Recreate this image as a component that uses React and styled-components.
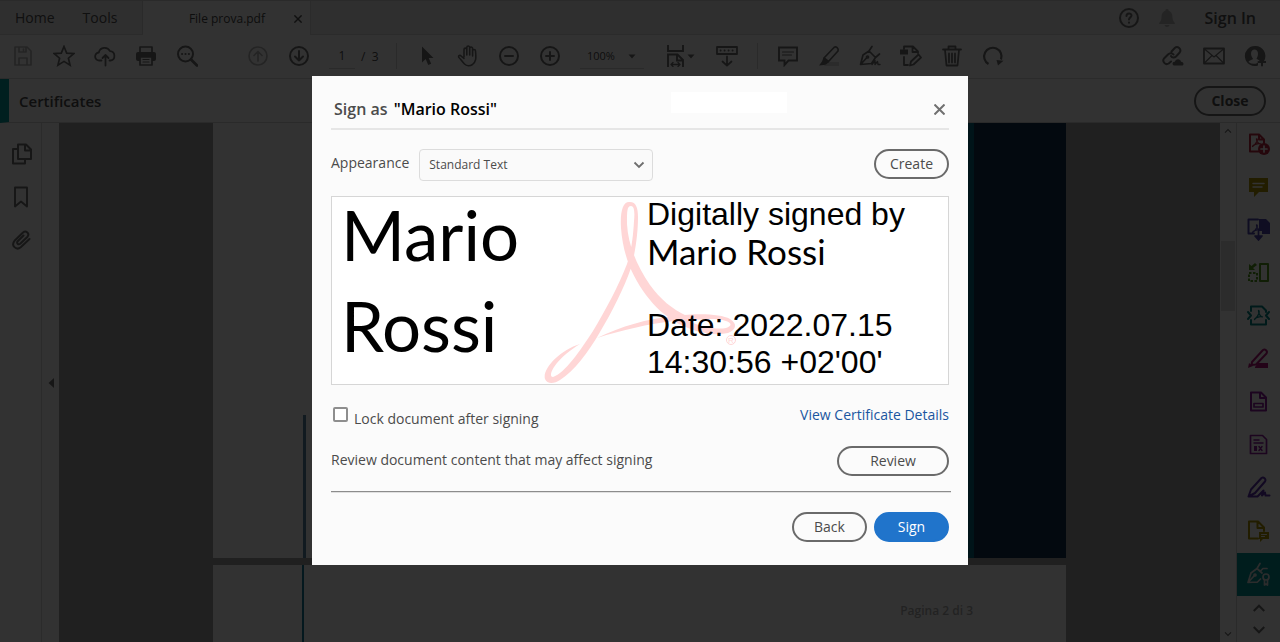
import React, { useState } from 'react';
import styled, { createGlobalStyle } from 'styled-components';

const GlobalStyle = createGlobalStyle`
  * {
    box-sizing: border-box;
  }

  body {
    margin: 0;
    overflow: hidden;
    font-family: 'Open Sans', 'Noto Sans', sans-serif;
    font-size: 14px;
    color: #4b4b4b;
  }

  button, input, select {
    font: inherit;
    color: inherit;
  }
`;

/* ---------- shell ---------- */

const Shell = styled.div`
  display: flex;
  flex-direction: column;
  height: 100vh;
  background: #fafafa;
`;

const TabBar = styled.header`
  display: flex;
  align-items: stretch;
  height: 35px;
  background: #e8e8e8;
  border-top: 1px solid #d0d0d0;
  border-bottom: 1px solid #d8d8d8;
`;

const MenuButton = styled.button`
  padding: 0;
  border: 0;
  background: none;
  color: #505050;
`;

const Menu = styled.nav`
  display: flex;
  gap: 28px;
  width: 143px;
  padding-left: 15px;
  border-right: 1px solid #d0d0d0;
`;

const FileTab = styled.div`
  display: flex;
  align-items: center;
  justify-content: flex-end;
  gap: 29px;
  width: 168px;
  padding-right: 8px;
  margin-bottom: -1px;
  background: #fafafa;
  border-right: 1px solid #d8d8d8;
  font-size: 12px;
  color: #464646;
`;

const Account = styled.div`
  display: flex;
  align-items: center;
  gap: 16px;
  margin-left: auto;
  padding-right: 24px;
`;

const SignIn = styled(MenuButton)`
  margin-left: 11px;
  font-size: 16px;
  font-weight: 600;
`;

const Toolbar = styled.div`
  display: flex;
  align-items: center;
  gap: 19px;
  height: 44px;
  padding: 0 14px 1px 12px;
  border-bottom: 1px solid #d8d8d8;
  font-size: 12px;
`;

const IconButton = styled.button`
  display: flex;
  align-items: center;
  justify-content: center;
  width: ${(p) => p.$width || 22}px;
  height: 22px;
  flex: none;
  padding: 0;
  border: 0;
  background: none;
  color: ${(p) => (p.$faded ? '#b4b4b4' : '#6e6e6e')};
  margin-left: ${(p) => (p.$spaced ? '30px' : '0')};
`;

const Separator = styled.span`
  width: 1px;
  height: 26px;
  background: #d0d0d0;
`;

const PageBox = styled.label`
  display: flex;
  align-items: center;
  gap: 6px;
  width: 48px;
  white-space: pre;
`;

const PageInput = styled.input`
  width: 26px;
  height: 26px;
  padding: 0;
  border: 0;
  border-bottom: 1px solid #d0d0d0;
  background: none;
  text-align: center;
`;

const SelectBox = styled.span`
  display: grid;
  align-items: center;

  > * {
    grid-area: 1 / 1;
  }

  > svg {
    justify-self: end;
    margin-right: 8px;
    pointer-events: none;
  }
`;

const ZoomSelect = styled.select`
  appearance: none;
  width: 64px;
  height: 26px;
  padding: 0 0 0 7px;
  border: 0;
  border-bottom: 1px solid #d0d0d0;
  background: none;
  font-size: 11px;
`;

const Share = styled.div`
  display: flex;
  gap: 19px;
  margin-left: auto;
`;

const ToolHeader = styled.div`
  display: flex;
  align-items: center;
  justify-content: space-between;
  height: 44px;
  padding: 0 14px 0 10px;
  border-left: 9px solid #009a9a;
  border-bottom: 1px solid #d0d0d0;
`;

const ToolTitle = styled.h1`
  margin: 0;
  font-size: 15px;
  font-weight: 600;
`;

const PillButton = styled.button`
  width: ${(p) => p.$width || 75}px;
  height: 30px;
  padding: 0;
  border: 2px solid ${(p) => (p.$primary ? '#2074cb' : '#6a6a6a')};
  border-radius: 15px;
  background: ${(p) => (p.$primary ? '#2074cb' : 'transparent')};
  color: ${(p) => (p.$primary ? '#ffffff' : '#4b4b4b')};
  font-size: 14px;
  font-weight: ${(p) => (p.$bold ? 700 : 400)};
  line-height: 20px;
`;

/* ---------- document area ---------- */

const Workspace = styled.div`
  display: flex;
  flex: 1;
  min-height: 0;
`;

const LeftRail = styled.nav`
  display: flex;
  flex-direction: column;
  align-items: center;
  gap: 21px;
  width: 42px;
  padding: 20px 0 0 2px;
  border-right: 1px solid #d8d8d8;
`;

const CollapseStrip = styled.div`
  display: flex;
  align-items: center;
  justify-content: center;
  width: 17px;
`;

const Viewer = styled.main`
  display: flex;
  flex-direction: column;
  align-items: center;
  gap: 7px;
  flex: 1;
  overflow: hidden;
  background: #a0a0a0;
`;

const Sheet = styled.section`
  display: flex;
  flex: none;
  width: calc(100% - 308px);
  height: 435px;
  background: #fafafa;
`;

const MarginLine = styled.div`
  align-self: flex-end;
  width: ${(p) => p.$width}px;
  height: ${(p) => p.$height};
  margin-left: ${(p) => p.$offset}px;
  background: ${(p) => p.$color};
`;

const CoverBanner = styled.div`
  width: 108px;
  margin-left: auto;
  border-left: 16px solid #00647d;
  background: #12304e;
`;

const PageNumber = styled.p`
  margin: 37px 93px 0 auto;
  font-size: 12px;
  font-weight: 600;
  line-height: 18px;
  color: #acacac;
`;

const Scrollbar = styled.div`
  display: flex;
  flex-direction: column;
  align-items: center;
  width: 17px;
  padding: 4px 0;
  border-right: 1px solid #d0d0d0;
`;

const Thumb = styled.div`
  width: 14px;
  height: 70px;
  margin-top: 106px;
  margin-bottom: auto;
  background: #dcdcdc;
`;

const RightRail = styled.nav`
  display: flex;
  flex-direction: column;
  width: 43px;
`;

const RailButton = styled.button`
  display: flex;
  align-items: center;
  justify-content: center;
  flex: none;
  width: 43px;
  height: ${(p) => p.$height || 43}px;
  padding: 0 0 2px;
  border: 0;
  background: ${(p) => (p.$active ? '#008f93' : 'none')};
  color: ${(p) => p.$color};
`;

/* ---------- dialog ---------- */

const Backdrop = styled.div`
  position: fixed;
  inset: 0;
  display: flex;
  justify-content: center;
  align-items: flex-start;
  padding-top: 76px;
  background: rgba(0, 0, 0, 0.8);
`;

const Dialog = styled.section`
  width: 656px;
  padding: 0 19px 23px;
  background: #fbfbfb;
`;

const DialogHeader = styled.header`
  display: flex;
  align-items: center;
  height: 54px;
  padding: 14px 0 0 3px;
  border-bottom: 2px solid #e6e6e6;
`;

const DialogTitle = styled.h2`
  margin: 0;
  font-size: 16px;
  font-weight: 600;

  strong {
    margin-left: 2px;
    font-weight: 600;
    color: #000000;
  }
`;

const BlankPatch = styled.div`
  align-self: flex-start;
  width: 116px;
  height: 21px;
  margin: 2px 142px 0 auto;
  background: #ffffff;
`;

const CloseButton = styled.button`
  display: flex;
  align-items: center;
  justify-content: center;
  width: 20px;
  height: 20px;
  padding: 0;
  border: 0;
  background: none;
  color: #707070;
`;

const Row = styled.div`
  display: flex;
  align-items: flex-start;
  justify-content: space-between;
  margin-top: ${(p) => p.$top}px;
`;

const AppearanceField = styled.div`
  display: flex;
  align-items: flex-start;
  gap: 10px;
`;

const FieldText = styled.span`
  line-height: 28px;
`;

const AppearanceSelect = styled.select`
  appearance: none;
  width: 234px;
  height: 32px;
  padding: 0 30px 2px 9px;
  border: 1px solid #dcdcdc;
  border-radius: 4px;
  background: #fafafa;
  font-size: 12px;
`;

const Preview = styled.div`
  position: relative;
  display: grid;
  grid-template-columns: 315px 1fr;
  height: 189px;
  margin-top: 15px;
  border: 1px solid #d6d6d6;
  background: #ffffff;
  color: #000000;
`;

const Watermark = styled.svg`
  position: absolute;
  left: 208px;
  top: 0;
`;

const SignerName = styled.div`
  position: relative;
  width: 220px;
  margin-top: -8px;
  padding-left: 9px;
  font-family: Lato, sans-serif;
  font-size: 69px;
  line-height: 91px;
`;

const SignatureText = styled.div`
  position: relative;
  margin-top: -1px;
  font-family: 'Liberation Sans', Arial, sans-serif;
  font-size: 32px;
  line-height: 37px;

  p {
    margin: 0;
  }
`;

const SignatureName = styled.div`
  font-family: Lato, sans-serif;
  font-size: 35px;
`;

const CheckLabel = styled.label`
  display: flex;
  align-items: flex-start;
  gap: 6px;
  padding-left: 2px;
  line-height: 20px;

  span {
    padding-top: 4px;
  }
`;

const Checkbox = styled.input`
  appearance: none;
  width: 15px;
  height: 15px;
  margin: 2px 0 0;
  border: 2px solid #8e8e8e;
  border-radius: 2px;
  background: #ffffff;
`;

const DetailsLink = styled.a`
  line-height: 20px;
  color: #1a56a0;
  text-decoration: none;
`;

const Divider = styled.hr`
  margin: 15px -2px 0 0;
  border: 0;
  border-top: 1px solid #8c8c8c;
  border-bottom: 1px solid #e0e0e0;
`;

const Actions = styled.footer`
  display: flex;
  justify-content: flex-end;
  gap: 7px;
  margin-top: 19px;
`;

/* ---------- icons ---------- */

const Icon = ({ children, size = 22, width = 1.7 }) => (
  <svg
    width={size}
    height={size}
    viewBox={`0 0 ${size} ${size}`}
    fill="none"
    stroke="currentColor"
    strokeWidth={width}
    strokeLinejoin="round"
    strokeLinecap="round"
    aria-hidden="true"
  >
    {children}
  </svg>
);

const Caret = () => (
  <svg width="8" height="5" viewBox="0 0 8 5" aria-hidden="true">
    <path d="M0.5 0.5h7L4 4.5z" fill="#6e6e6e" />
  </svg>
);

const Chevron = ({ up, size = 12, color = '#6e6e6e' }) => (
  <svg width={size} height={size} viewBox="0 0 12 12" fill="none" stroke={color} strokeWidth="1.8" aria-hidden="true">
    <path d={up ? 'M1.5 8.5L6 4l4.500 4.500' : 'M1.500 3.500L6 8l4.500-4.500'} />
  </svg>
);

const icons = {
  save: (
    <Icon>
      <path d="M3 2h12l4 4v14H3z M7 20v-7h8v7 M7 2v5h7V2 M11.500 4v1.500" />
    </Icon>
  ),
  star: (
    <Icon>
      <path d="M11 1.500l2.700 6.600 7.100.5-5.400 4.600 1.700 7L11 16.400 4.900 20.200l1.700-7L1.200 8.600l7.100-.5z" strokeLinejoin="miter" />
    </Icon>
  ),
  cloud: (
    <Icon width={1.8}>
      <path d="M7.500 15.500H5.500a4 4 0 0 1-.7-8A6 6 0 0 1 16 6.200a4.700 4.700 0 0 1 .6 9.300H15.500 M11.500 20.500v-10 M8.500 13l3-3 3 3" />
    </Icon>
  ),
  print: (
    <Icon>
      <path d="M5 7V2h12v5" />
      <rect x="1" y="7" width="20" height="9" rx="2" fill="currentColor" stroke="none" />
      <path d="M5 12h12v8H5z" fill="#fafafa" />
      <path d="M8 14.500h6M8 17h6" strokeWidth="1.200" />
    </Icon>
  ),
  search: (
    <Icon width={2}>
      <circle cx="9.500" cy="9" r="7.500" />
      <path d="M15 14.500l6 6" strokeWidth="2.800" />
      <path d="M6 9h.2M9.400 9h.2M12.800 9h.2" />
    </Icon>
  ),
  up: (
    <Icon>
      <circle cx="11" cy="11" r="9" />
      <path d="M11 16V6.500M7 10.500l4-4 4 4" />
    </Icon>
  ),
  down: (
    <Icon width={2}>
      <circle cx="11" cy="11" r="9" />
      <path d="M11 6v9.500M7 11.500l4 4 4-4" />
    </Icon>
  ),
  cursor: (
    <Icon>
      <path d="M6 1.500v16l3.700-3.400 2.500 5.900 3-1.300-2.500-5.700h4.800z" fill="currentColor" stroke="none" />
    </Icon>
  ),
  hand: (
    <Icon width={1.6}>
      <path d="M7 12V4.500a1.400 1.400 0 0 1 2.800 0V10 M9.800 10V2.500a1.400 1.400 0 0 1 2.900 0V10 M12.700 10V3.500a1.400 1.400 0 0 1 2.900 0V11 M15.600 10V6a1.400 1.400 0 0 1 2.900 0c.8 8 .5 10.500-3 13.500-2.500 1.600-6 1.500-8-.5C5 16.500 3.500 14 1.700 12.200c-.5-1.400.6-2.200 1.900-1.600L7 13.500" />
    </Icon>
  ),
  minus: (
    <Icon width={2}>
      <circle cx="11" cy="11" r="9" />
      <path d="M7 11h8" />
    </Icon>
  ),
  plus: (
    <Icon width={2}>
      <circle cx="11" cy="11" r="9" />
      <path d="M7 11h8M11 7v8" />
    </Icon>
  ),
  fit: (
    <Icon width={1.9}>
      <path d="M3 0v6h15V0 M3 22V9.500h9.500L18 15v7 M12 10v5.500h6" strokeLinecap="butt" strokeLinejoin="miter" />
      <path d="M6 19.500h9M8 17.500l-2 2 2 2M13 17.500l2 2-2 2" strokeWidth="1.300" />
    </Icon>
  ),
  keyboard: (
    <Icon width={1.8}>
      <rect x="1" y="2" width="20" height="7" />
      <path d="M4.500 5.500h.2M8.500 5.500h.2M12.500 5.500h.2M16.500 5.500h.2" />
      <path d="M11 11.500v9M6.500 16.500l4.500 4.200 4.500-4.200" />
    </Icon>
  ),
  comment: (
    <Icon width={1.9}>
      <path d="M2 2.500h18v13h-8.500L7.500 20v-4.500H2z" strokeLinejoin="miter" />
      <path d="M5.500 7h11M5.500 10h9" strokeWidth="1.200" />
    </Icon>
  ),
  highlight: (
    <Icon>
      <path d="M8 17h13v4H6z" fill="#d8d8d8" stroke="none" />
      <path d="M6 13L16 2.500c2-1.500 5 .5 4 3.500L10.500 16.500z" />
      <path d="M5.500 12.500l5.500 4.500-3 2.500-2 .5-5 .5 3-4z" fill="currentColor" stroke="none" />
    </Icon>
  ),
  pen: (
    <Icon>
      <path d="M1.500 19.500L4 10l6-4 6.500 6.500-4 6z M2 19l5.500-6 M10 6l3-4.500 M16.500 12.500L20.500 9" />
      <circle cx="8.500" cy="12" r="1" />
      <path d="M13 19.500l3-4v4l2.500-3 .5 3h2" strokeWidth="1.400" />
    </Icon>
  ),
  edit: (
    <Icon width={1.8}>
      <rect x="0" y="4.500" width="8" height="5" fill="currentColor" stroke="none" />
      <path d="M4 4V1.500h9l5 5V8 M12.500 2v5H18 M4 12v8h4" />
      <path d="M10 20.500l1-4 7.500-7 2.500 3-7.500 7z" />
    </Icon>
  ),
  trash: (
    <Icon width={1.8}>
      <path d="M2 4.500h18 M7.500 4V1.500h7V4 M4 5l1.500 15.500h11L18 5 M8 8.500v9M11 8.500v9M14 8.500v9" />
    </Icon>
  ),
  rotate: (
    <Icon width={2.2}>
      <path d="M6.500 19A8.700 8.700 0 1 1 19 14.500" strokeLinecap="butt" />
      <path d="M14.500 15l7 .8-5.500 4.700z" fill="currentColor" stroke="none" />
    </Icon>
  ),
  link: (
    <Icon width={2}>
      <path d="M9.500 6.500l3.500-3.700c2.500-2.200 7 1.200 4.700 4.700L14 11.500c-1.500 1.500-4 1.300-5-.5 M11.500 9.500c-1.500-2-4-1.500-5.500 0L2 13.500c-2.200 3 1.500 7 4.700 5L9 16.500" />
      <path d="M12 20.500c-2.500-1-1.500-4 .8-3.700 1.200-4 6-3 6.200 0 3.200.2 3.200 3.500 1 3.700z" fill="currentColor" stroke="none" />
    </Icon>
  ),
  mail: (
    <Icon width={1.8}>
      <rect x="1" y="3.500" width="20" height="15" />
      <path d="M1.500 4l9.500 8 9.500-8 M1.500 18l7.500-7.500M20.500 18L13 10.500" strokeWidth="1.200" />
    </Icon>
  ),
  user: (
    <Icon width={1.8}>
      <path d="M11 1a10 10 0 1 0 3 19.500V16h6a10 10 0 0 0-9-15z" fill="currentColor" stroke="none" />
      <path d="M4.500 17c1-2 4-2 4.500-3.200C6 10 6.500 4.500 10.500 4.500S15 10 12.500 13.800l3 1.700-2 2.500a9 9 0 0 1-9-1z" fill="#fafafa" stroke="none" />
      <path d="M18 13.500v7M14.500 17h7" strokeWidth="2" />
    </Icon>
  ),
  help: (
    <Icon width={2}>
      <circle cx="11" cy="11" r="9" />
      <path d="M8.500 9c0-3.300 5-3.300 5-.5 0 1.900-2.500 1.900-2.500 4M11 15.500v.2" />
    </Icon>
  ),
  bell: (
    <Icon>
      <path d="M11 2a1.500 1.500 0 0 1 1.600 1.700C16 5 16.500 8 16.500 11c0 3 2.500 4 2.500 6H3c0-2 2.500-3 2.500-6 0-3 .5-6 3.900-7.300A1.500 1.500 0 0 1 11 2zM8.500 18h5c-.5 2.500-4.500 2.500-5 0z" fill="currentColor" stroke="none" />
    </Icon>
  ),
  pages: (
    <Icon width={2}>
      <path d="M7 1.500h8l5 5V16H7z M14 2v5.500h5.500 M7 6H2v14.500h12V16" />
    </Icon>
  ),
  bookmark: (
    <Icon width={1.9}>
      <path d="M4 1.500h12v19l-6-5-6 5z" />
    </Icon>
  ),
  clip: (
    <Icon width={2}>
      <path d="M18.500 10l-8.800 8.300c-4.500 3.600-10-1.800-6.200-6.500L12 3.500c3-2.500 7 1 4.500 4.200l-7.300 7c-2 1.400-4-.6-2.500-2.500L12.500 6.500" />
    </Icon>
  ),
};

// small acrobat squiggle used inside several rail icons
const Squiggle = () => (
  <path d="M9.500 7c2 0 0 5-4 7.500 0-1.500 5-3.500 8-2.700-1.500.5-4-2-4-4.800z" strokeWidth="1.300" />
);

const railTools = [
  { name: 'Create PDF', color: '#b8253f', art: <><path d="M13 19.500H3v-17h9l5 5V11 M12 3v4.500h5" strokeWidth="2" /><Squiggle /><circle cx="17" cy="17" r="6" fill="currentColor" stroke="none" /><path d="M17 14v6M14 17h6" stroke="#fafafa" /></> },
  { name: 'Comment', color: '#a88f00', art: <><path d="M2 3h19v14h-9l-5 5v-5H2z" fill="currentColor" stroke="none" /><path d="M6 8.500h11M6 12h9" stroke="#fafafa" strokeWidth="1.500" /></> },
  { name: 'Combine Files', color: '#4a42a8', art: <><path d="M11 1.500H1.500v14H7" strokeWidth="2" /><Squiggle /><path d="M12 1h7l4 4v11h-8v-3h-3z" fill="currentColor" stroke="none" /><path d="M11.500 12v9M8 18l3.500 4 3.500-4z" fill="currentColor" /></> },
  { name: 'Organize Pages', color: '#4f961a', art: <><path d="M13 3h8v17h-8z" strokeWidth="2" /><path d="M2 12h8v8H2z" strokeWidth="2" strokeDasharray="2.500 1.500" strokeLinecap="butt" /><path d="M2 3v6h6L6 7l4-3-2-2-3.500 3z" fill="currentColor" stroke="none" /></> },
  { name: 'Compress PDF', color: '#008080', art: <><path d="M4 7V2.500h11l4 4V8 M4 16v4.500h15V16 M1 8l3 3.500L1 15 M22 8l-3 3.500 3 3.500" strokeWidth="2" /><path d="M11.500 6.500c1.500 0 .5 5.500-4 9 0-1.500 5-3.500 8-2.700-1.500.5-4-3-4-6.300z" strokeWidth="1.300" /></> },
  { name: 'Redact', color: '#b01878', art: <><path d="M5 15L16 3c2-1.500 5 1 3.500 3.500L9 17.500l-4.500.5z" strokeWidth="2" /><path d="M2 16l4 3-5 2z M8 20l3-4h10v5H8z" fill="currentColor" stroke="none" /></> },
  { name: 'Prepare Form', color: '#8a1c9a', art: <><path d="M4 2.500h10l5 5v13H4z M13 3v5h5.500" strokeWidth="2" /><path d="M7 13.500h9v3.500H7z" /></> },
  { name: 'Rich Media', color: '#8a1c9a', art: <><path d="M3.500 2.500h12l4 4v14h-16z" /><path d="M7 7h5M7 10h9M15 13.500l-3 4M12 13.500l3 4" strokeWidth="1.500" /><path d="M7 13h3v5H7z" fill="currentColor" stroke="none" /></> },
  { name: 'Fill & Sign', color: '#5a30a8', art: <><path d="M1.500 20.500L4 13.500 14.500 2c2-1.500 5 1 3.500 3.500L8 17z M1.500 20.500h9l6-6-1.500 5 3-3 .5 3h4" strokeWidth="2" /></> },
  { name: 'Send for Comments', color: '#a88f00', art: <><path d="M11 19.500H2v-17h9l6 6V12 M10.500 3v6H17" strokeWidth="2" /><path d="M12 13h10v7h-6l-3 3v-3h-1z" fill="currentColor" stroke="none" /><path d="M14.500 15.500h5M14.500 17.500h3" stroke="#fafafa" strokeWidth="1" /></> },
  { name: 'Certificates', color: '#dcdcdc', active: true, art: <><path d="M1 20.500L4 11l6-4.500L15 11 M10.500 20l-9.500.5 6-6.500 M10.500 20l3-3 M10 6.500l3-5M13 9.500l3-3h4" /><circle cx="8" cy="13" r="1" /><circle cx="19" cy="15" r="3" /><path d="M17.500 18v5l1.500-1 1.500 1v-5" /></> },
];

const ToolIcon = ({ name, ...props }) => (
  <IconButton aria-label={name} {...props}>{icons[name]}</IconButton>
);

const AcrobatWatermark = () => (
  <Watermark width="200" height="188" viewBox="0 0 200 188" fill="#ffd6d6" aria-hidden="true">
    <path d="M90 5C83 4 80 14 81 31C83 58 92 79 106 98C115 110 125 119 135 124L147 119C132 112 120 102 110 88C97 69 88 48 87 27C87 14 87 9 91 9C94 9 95 14 94 24C93 42 91 55 87 67C79 88 65 114 53 134C40 154 25 176 13 180C7 180 14 163 40 147C20 153 2 172 5 182C7 187 14 187 20 183C34 174 48 156 60 135C72 115 84 91 91 71C96 53 98 34 98 20C98 11 96 5 90 5Z" />
    <path d="M57 141C82 129 106 122 135 119C158 116 181 117 190 122C198 127 196 133 188 136C171 140 148 133 134 124C108 127 82 133 57 141ZM149 124C161 130 177 133 186 131C192 129 192 126 186 124C176 121 160 122 149 124Z" fillRule="evenodd" />
    <circle cx="191" cy="143" r="4.500" fill="none" stroke="#ffd6d6" />
    <text x="191" y="146" textAnchor="middle" fontSize="8" fontFamily="Liberation Sans">R</text>
  </Watermark>
);

const CrossIcon = ({ size = 11 }) => (
  <svg width={size} height={size} viewBox="0 0 11 11" fill="none" stroke="currentColor" strokeWidth="2" aria-hidden="true">
    <path d="M0.500 0.500l10 10M10.500 0.500l-10 10" />
  </svg>
);

const SignDialog = () => {
  const [locked, setLocked] = useState(false);

  return (
    <Dialog role="dialog" aria-labelledby="dialog-title">
      <DialogHeader>
        <DialogTitle id="dialog-title">Sign as <strong>"Mario Rossi"</strong></DialogTitle>
        <BlankPatch />
        <CloseButton aria-label="Close dialog"><CrossIcon /></CloseButton>
      </DialogHeader>

      <Row $top={19}>
        <AppearanceField>
          <FieldText as="label" htmlFor="appearance">Appearance</FieldText>
          <SelectBox>
            <AppearanceSelect id="appearance" defaultValue="standard">
              <option value="standard">Standard Text</option>
            </AppearanceSelect>
            <Chevron />
          </SelectBox>
        </AppearanceField>
        <PillButton>Create</PillButton>
      </Row>

      <Preview>
        <AcrobatWatermark />
        <SignerName>Mario Rossi</SignerName>
        <SignatureText>
          <p>Digitally signed by</p>
          <SignatureName>Mario Rossi</SignatureName>
          <br />
          <p>Date: 2022.07.15</p>
          <p>14:30:56 +02'00'</p>
        </SignatureText>
      </Preview>

      <Row $top={20}>
        <CheckLabel>
          <Checkbox type="checkbox" checked={locked} onChange={(e) => setLocked(e.target.checked)} />
          <span>Lock document after signing</span>
        </CheckLabel>
        <DetailsLink href="#details">View Certificate Details</DetailsLink>
      </Row>

      <Row $top={17}>
        <FieldText>Review document content that may affect signing</FieldText>
        <PillButton $width={112}>Review</PillButton>
      </Row>

      <Divider />

      <Actions>
        <PillButton>Back</PillButton>
        <PillButton $primary>Sign</PillButton>
      </Actions>
    </Dialog>
  );
};

const App = () => (
  <>
    <GlobalStyle />
    <Shell>
      <TabBar>
        <Menu>
          <MenuButton>Home</MenuButton>
          <MenuButton>Tools</MenuButton>
        </Menu>
        <FileTab>
          File prova.pdf
          <MenuButton aria-label="Close tab"><CrossIcon size={8} /></MenuButton>
        </FileTab>
        <Account>
          <ToolIcon name="help" />
          <ToolIcon name="bell" $faded />
          <SignIn>Sign In</SignIn>
        </Account>
      </TabBar>

      <Toolbar>
        <ToolIcon name="save" $faded />
        <ToolIcon name="star" />
        <ToolIcon name="cloud" />
        <ToolIcon name="print" />
        <ToolIcon name="search" />
        <ToolIcon name="up" $faded $spaced />
        <ToolIcon name="down" />
        <PageBox>
          <PageInput defaultValue="1" aria-label="Page" />
          /  3
        </PageBox>
        <Separator />
        <ToolIcon name="cursor" />
        <ToolIcon name="hand" />
        <ToolIcon name="minus" />
        <ToolIcon name="plus" />
        <SelectBox>
          <ZoomSelect aria-label="Zoom"><option>100%</option></ZoomSelect>
          <Caret />
        </SelectBox>
        <IconButton $width={34} aria-label="Fit width">{icons.fit}<Caret /></IconButton>
        <ToolIcon name="keyboard" />
        <Separator />
        <ToolIcon name="comment" />
        <ToolIcon name="highlight" />
        <ToolIcon name="pen" />
        <ToolIcon name="edit" />
        <ToolIcon name="trash" />
        <ToolIcon name="rotate" />
        <Share>
          <ToolIcon name="link" />
          <ToolIcon name="mail" />
          <ToolIcon name="user" />
        </Share>
      </Toolbar>

      <ToolHeader>
        <ToolTitle>Certificates</ToolTitle>
        <PillButton $width={72} $bold>Close</PillButton>
      </ToolHeader>

      <Workspace>
        <LeftRail>
          <ToolIcon name="pages" />
          <ToolIcon name="bookmark" />
          <ToolIcon name="clip" />
        </LeftRail>
        <CollapseStrip>
          <svg width="6" height="10" viewBox="0 0 6 10" aria-hidden="true">
            <path d="M6 0v10L0.500 5z" fill="#6e6e6e" />
          </svg>
        </CollapseStrip>
        <Viewer>
          <Sheet>
            <MarginLine $width={3} $height="143px" $offset={90} $color="#5582a0" />
            <CoverBanner />
          </Sheet>
          <Sheet>
            <MarginLine $width={2} $height="100%" $offset={89} $color="#147896" />
            <PageNumber>Pagina 2 di 3</PageNumber>
          </Sheet>
        </Viewer>
        <Scrollbar>
          <Chevron up size={8} />
          <Thumb />
          <Chevron size={8} />
        </Scrollbar>
        <RightRail>
          {railTools.map((tool) => (
            <RailButton key={tool.name} aria-label={tool.name} $color={tool.color} $active={tool.active}>
              <Icon size={24}>{tool.art}</Icon>
            </RailButton>
          ))}
          <RailButton aria-label="Scroll up" $height={25}><Chevron up size={14} /></RailButton>
          <RailButton aria-label="Scroll down" $height={20}><Chevron size={14} /></RailButton>
        </RightRail>
      </Workspace>
    </Shell>
    <Backdrop>
      <SignDialog />
    </Backdrop>
  </>
);

export default App;
